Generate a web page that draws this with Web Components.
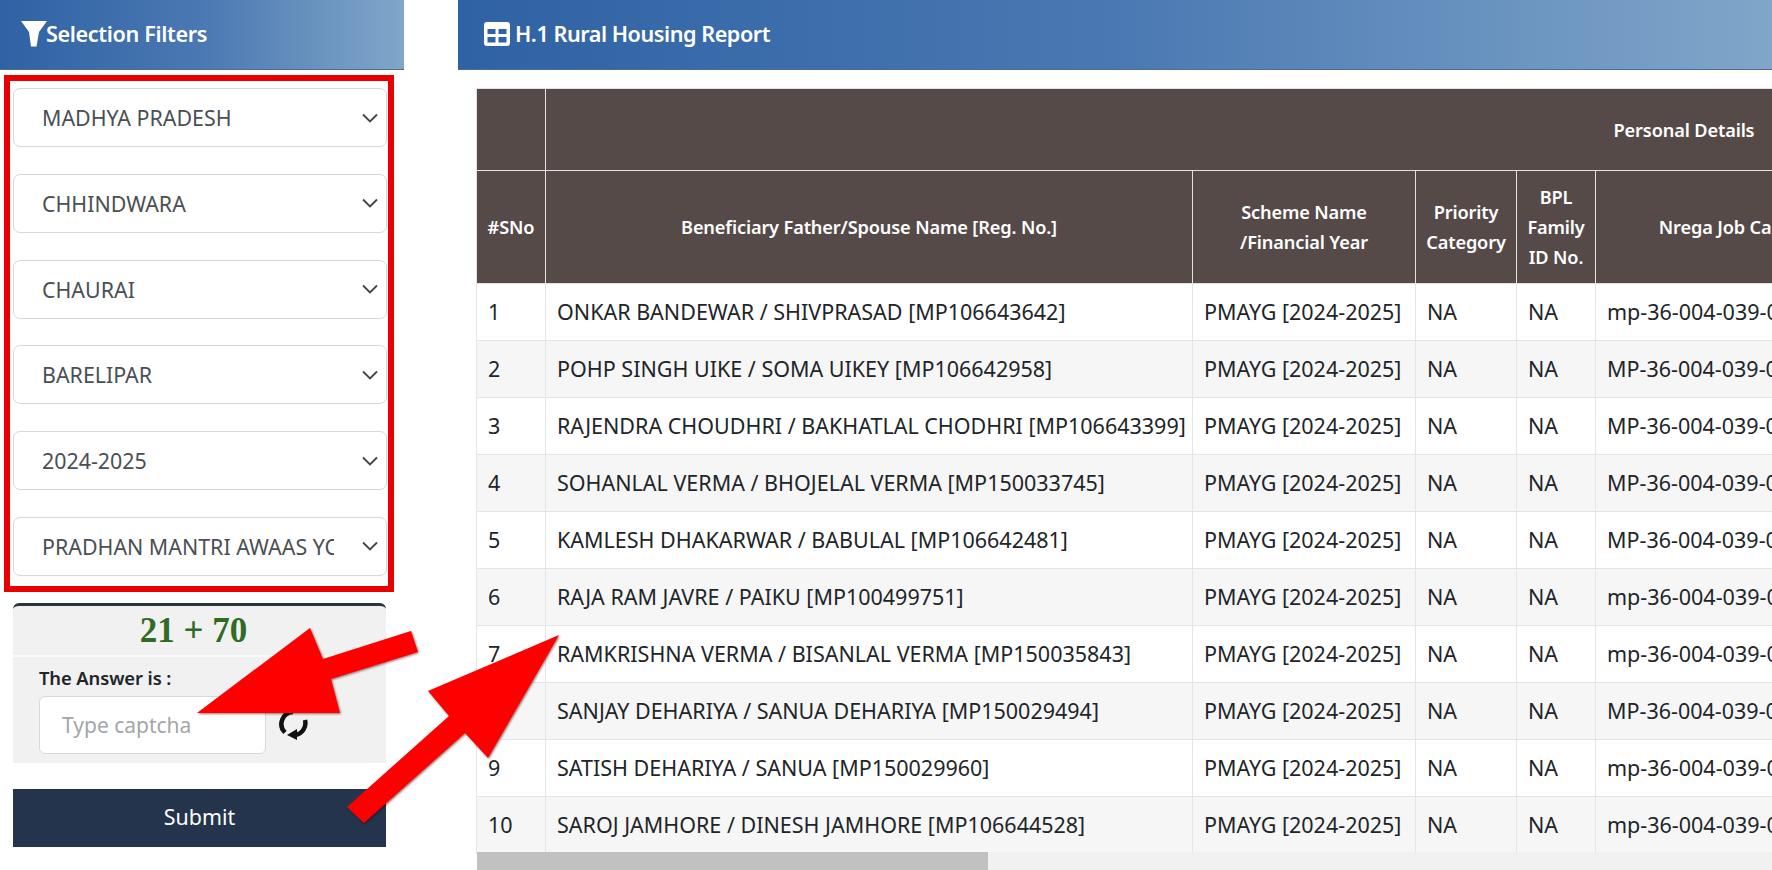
<!DOCTYPE html>
<html><head><meta charset="utf-8">
<style>
html,body{margin:0;padding:0;background:#fff;height:870px;overflow:hidden}
body{font-family:"Noto Sans","Open Sans",sans-serif;color:#212529}
</style></head>
<body>
<template id="tpl-app"><style>
:host{display:flex;width:1772px;height:870px;position:relative;overflow:hidden;gap:54px}
.left{width:404px;flex:none;display:flex;flex-direction:column}
.right{flex:1;min-width:0;display:flex;flex-direction:column}
.over{position:absolute;left:0;top:0;pointer-events:none;filter:drop-shadow(1px 1px 1px rgba(60,0,0,.55))}
</style>
<div class="left"><slot name="left"></slot></div>
<div class="right"><slot name="right"></slot></div>
<svg class="over" width="1772" height="870" viewBox="0 0 1772 870">
<polygon fill="#ff0000" points="411,631 418,652 331,679 340,713 197,713 310,628 323,659"/>
<polygon fill="#ff0000" points="559,635 428,691 449,716 347,807 364,823 465,733 488,758"/>
</svg>
</template>

<template id="tpl-head"><style>
:host{display:flex;align-items:center;height:70px;flex:none;box-sizing:border-box;padding-bottom:2px;color:#fff;font-size:21.6px;font-weight:600;letter-spacing:-.35px;
background:linear-gradient(90deg,#2f62a4 0%,#4a78b2 50%,#80a6c9 100%);border-bottom:1px solid #4a6f96}
</style><slot></slot></template>

<template id="tpl-select"><style>
:host{display:flex;align-items:center;justify-content:space-between;height:59px;box-sizing:border-box;background:#fff;border:1px solid #d6d9dc;border-radius:7px;padding:0 7px 0 28px;color:#4a4f54;font-size:21.4px}
.t{width:292px;overflow:hidden;white-space:nowrap}
svg{flex:none}
</style><span class="t"><slot></slot></span>
<svg width="18" height="12" viewBox="0 0 18 12" fill="none" stroke="#40464c" stroke-width="1.9"><path d="M2 2.500l7 7 7-7"/></svg>
</template>

<template id="tpl-filters"><style>
:host{display:flex;flex-direction:column;gap:26.8px;box-sizing:border-box;width:390px;height:517px;margin:5px 0 0 4px;border:6px solid #e80000;padding:7px 1px 0 3px}
</style><slot></slot></template>

<template id="tpl-captcha"><style>
:host{display:block;box-sizing:border-box;width:373px;height:160px;margin:11px 0 0 13px;background:#f1f1f1;border-top:3px solid #2b3540;border-radius:6px 6px 0 0}
.q{height:51px;box-sizing:border-box;padding:0 12px 0 0;display:flex;align-items:center;justify-content:center;font:bold 35px "Liberation Serif",serif;color:#2f6b24;border-bottom:2px solid #fafafa}
.b{padding:10px 0 0 26px}
.l{font-size:18.4px;font-weight:600;color:#212529;line-height:22px;letter-spacing:-.1px}
.r{display:flex;align-items:center;margin-top:7px;gap:12px}
.i{width:227px;height:58px;box-sizing:border-box;background:#fff;border:1px solid #d6d9dc;border-radius:6px;padding:0 0 0 22px;display:flex;align-items:center;color:#a2a6aa;font-size:21px}
</style>
<div class="q">21 + 70</div>
<div class="b"><div class="l">The Answer is :</div>
<div class="r"><div class="i">Type captcha</div>
<svg width="30" height="30" viewBox="0 0 30 30" fill="none" stroke="#111" stroke-width="4.500"><path d="M7 22.500A12 12 0 0 1 15 2"/><path d="M27 10A12 12 0 0 1 17 25"/><path fill="#111" stroke="none" d="M19 19v11l-10-5z"/></svg>
</div></div>
</template>

<template id="tpl-submit"><style>
:host{display:flex;align-items:center;justify-content:center;box-sizing:border-box;width:373px;height:58px;margin:26px 0 0 13px;padding-bottom:3px;background:#24344d;color:#fff;font-size:21.4px}
</style><slot></slot></template>

<template id="tpl-report"><style>
:host{display:block;flex:1;min-height:0;position:relative;overflow:hidden;margin:18px 0 0 18px}
table{border-collapse:collapse;table-layout:fixed;width:2346px}
th{background:#564a48;color:#fff;font-size:18.2px;font-weight:600;line-height:30px;text-align:center;border:1px solid #e4e2e1;padding:0;letter-spacing:-.15px;box-sizing:border-box}
td{font-size:21.5px;color:#212529;height:57px;padding:0 0 2px 11px;white-space:nowrap;overflow:hidden;border:1px solid #e3e5e7;box-sizing:border-box}
tr.a td{background:#f6f6f6}
thead tr.h1{height:82px}
thead tr.h2{height:113px}
.bar{position:absolute;left:1px;right:0;bottom:0;height:18px;background:#f1f1f1}
.bar i{display:block;width:511px;height:100%;background:#c1c1c1}
</style>
<table>
<colgroup><col style="width:69px"><col style="width:647px"><col style="width:223px"><col style="width:101px"><col style="width:79px"><col style="width:258px"><col style="width:969px"></colgroup>
<thead>
<tr class="h1"><th></th><th colspan="6">Personal Details</th></tr>
<tr class="h2"><th>#SNo</th><th>Beneficiary Father/Spouse Name [Reg. No.]</th><th>Scheme Name<br>/Financial Year</th><th>Priority<br>Category</th><th>BPL<br>Family<br>ID No.</th><th>Nrega Job Card</th><th></th></tr>
</thead>
<tbody id="b"></tbody>
</table>
<div class="bar"><i></i></div>
</template>

<app-shell>
 <section-head slot="left"><svg width="26" height="26" viewBox="0 0 26 26" style="margin:0 -1px 0 21px;flex:none"><path fill="#fff" d="M0 0H26L18 11L15.500 25.500H10L8 11Z"/></svg>Selection Filters</section-head>
 <filter-panel slot="left">
  <filter-select>MADHYA PRADESH</filter-select>
  <filter-select>CHHINDWARA</filter-select>
  <filter-select>CHAURAI</filter-select>
  <filter-select>BARELIPAR</filter-select>
  <filter-select>2024-2025</filter-select>
  <filter-select>PRADHAN MANTRI AWAAS YOJANA</filter-select>
 </filter-panel>
 <captcha-box slot="left"></captcha-box>
 <submit-bar slot="left">Submit</submit-bar>
 <section-head slot="right"><svg width="26" height="24" viewBox="0 0 26 24" style="margin:0 5px 0 26px;flex:none"><path fill="#fff" fill-rule="evenodd" d="M3 0h20a3 3 0 0 1 3 3v18a3 3 0 0 1-3 3H3a3 3 0 0 1-3-3V3a3 3 0 0 1 3-3zM3.500 7v5h8V7zm11 0v5h8V7zm-11 8v5.500h8V15zm11 0v5.500h8V15z"/></svg><span style="letter-spacing:-.45px">H.1 Rural Housing Report</span></section-head>
 <report-table slot="right"></report-table>
</app-shell>
<script>
function def(name,tpl,init){customElements.define(name,class extends HTMLElement{constructor(){super();this.attachShadow({mode:'open'}).appendChild(document.getElementById(tpl).content.cloneNode(true));}connectedCallback(){if(init)init(this.shadowRoot);}});}
const rows=[
["ONKAR BANDEWAR / SHIVPRASAD [MP106643642]","mp"],
["POHP SINGH UIKE / SOMA UIKEY [MP106642958]","MP"],
["RAJENDRA CHOUDHRI / BAKHATLAL CHODHRI [MP106643399]","MP"],
["SOHANLAL VERMA / BHOJELAL VERMA [MP150033745]","MP"],
["KAMLESH DHAKARWAR / BABULAL [MP106642481]","MP"],
["RAJA RAM JAVRE / PAIKU [MP100499751]","mp"],
["RAMKRISHNA VERMA / BISANLAL VERMA [MP150035843]","mp"],
["SANJAY DEHARIYA / SANUA DEHARIYA [MP150029494]","MP"],
["SATISH DEHARIYA / SANUA [MP150029960]","mp"],
["SAROJ JAMHORE / DINESH JAMHORE [MP106644528]","mp"]];
def('app-shell','tpl-app');
def('section-head','tpl-head');
def('filter-select','tpl-select');
def('filter-panel','tpl-filters');
def('captcha-box','tpl-captcha');
def('submit-bar','tpl-submit');
def('report-table','tpl-report',s=>{
 const b=s.getElementById('b');
 rows.forEach((r,i)=>{const t=document.createElement('tr');if(i%2)t.className='a';
  t.innerHTML=`<td>${i+1}</td><td>${r[0]}</td><td>PMAYG [2024-2025]</td><td>NA</td><td>NA</td><td>${r[1]}-36-004-039-001/1234</td><td></td>`;
  b.appendChild(t);});
});
</script>
</body></html>
